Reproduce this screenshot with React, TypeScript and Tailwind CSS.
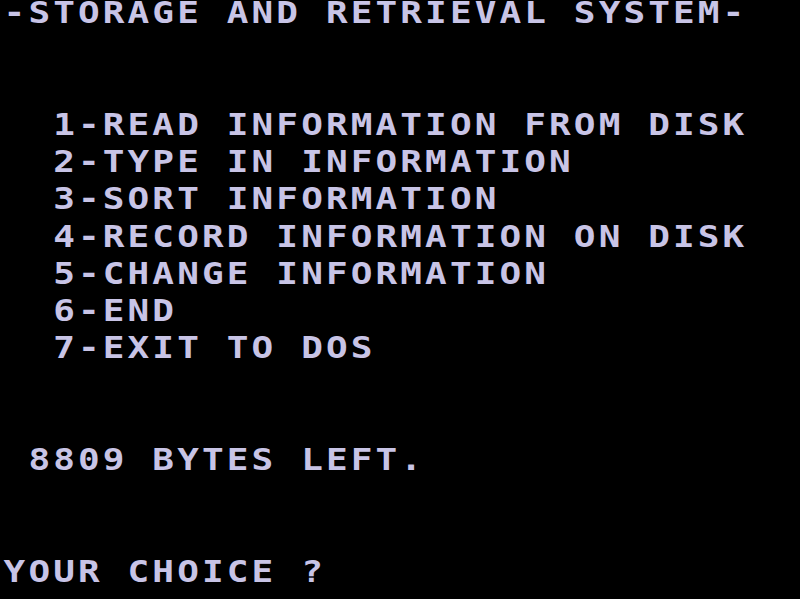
import React from "react";

const lines = [
  "-STORAGE AND RETRIEVAL SYSTEM-",
  "",
  "",
  "  1-READ INFORMATION FROM DISK",
  "  2-TYPE IN INFORMATION",
  "  3-SORT INFORMATION",
  "  4-RECORD INFORMATION ON DISK",
  "  5-CHANGE INFORMATION",
  "  6-END",
  "  7-EXIT TO DOS",
  "",
  "",
  " 8809 BYTES LEFT.",
  "",
  "",
  "YOUR CHOICE ?",
];

const App = () => {
  return (
    <div className="h-[599px] w-[800px] overflow-hidden bg-black">
      <div className="font-['DejaVu_Sans_Mono',monospace] text-[30px] font-semibold leading-[25px] tracking-[2.6px] text-[#c8c4e6]">
        {lines.map((line, i) => (
          <div
            key={i}
            className="h-[37.27px] origin-left scale-x-[1.2] whitespace-pre pl-[3px]"
          >
            {line}
          </div>
        ))}
      </div>
    </div>
  );
};

export default App;
